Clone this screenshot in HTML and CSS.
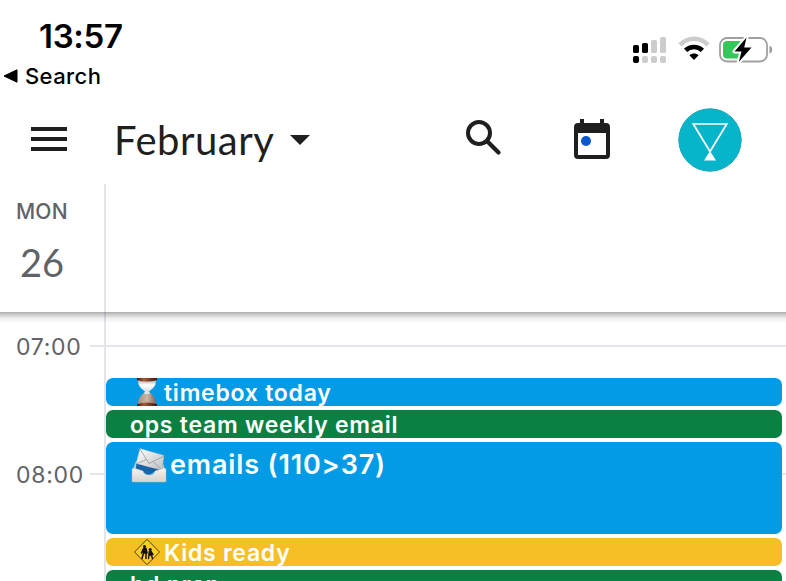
FILE: index.html
```html
<!DOCTYPE html>
<html lang="en">
<head>
    <meta charset="UTF-8">
    <meta name="viewport" content="width=device-width, initial-scale=1.0">
    <title>Calendar - February</title>
    <link rel="stylesheet" href="styles.css">
</head>
<body>
    <div class="status-bar">
        <div class="status-left">
            <div class="clock">13:57</div>
            <div class="back-link">
                <svg width="15" height="14" viewBox="0 0 15 14"><path d="M1 7L14 .8V13.2Z" stroke="#000" stroke-linejoin="round"/></svg>
                <span>Search</span>
            </div>
        </div>
        <div class="status-icons">
            <svg class="signal" width="34" height="27" viewBox="0 0 34 27">
                <g fill="#000">
                    <rect x="0" y="8" width="6" height="8" rx="1.6"/>
                    <rect x="9" y="6" width="6" height="10" rx="1.6"/>
                    <rect x="0" y="19" width="6" height="7" rx="2"/>
                </g>
                <g fill="#ccc">
                    <rect x="18" y="3" width="6" height="13" rx="1.6"/>
                    <rect x="27" y="0" width="6" height="16" rx="1.6"/>
                    <rect x="9" y="19" width="6" height="7" rx="2"/>
                    <rect x="18" y="19" width="6" height="7" rx="2"/>
                    <rect x="27" y="19" width="6" height="7" rx="2"/>
                </g>
            </svg>
            <svg class="wifi" width="32" height="25" viewBox="0 0 32 25" fill="none">
                <path d="M2 8.8C10 .8 22 .8 30 8.8" stroke="#ccc" stroke-width="4.6"/>
                <path d="M7.6 14.4C12.2 9.8 19.8 9.8 24.4 14.4" stroke="#000" stroke-width="4.6"/>
                <path d="M11.4 19.2C14 16.9 18 16.9 20.6 19.2L16 24Z" fill="#000"/>
            </svg>
            <svg class="battery" width="54" height="28" viewBox="0 0 54 28">
                <rect x="1" y="2" width="47" height="23.5" rx="7" fill="#fff" stroke="#a0a0a0" stroke-width="1.8"/>
                <path d="M8 5H23V22.5H8Q4 22.5 4 18.5V9Q4 5 8 5Z" fill="#35c759"/>
                <path d="M50.5 9.5Q53.3 11 53.3 13.7Q53.3 16.5 50.5 18Z" fill="#999"/>
                <path d="M27.5 1.5L15.5 15.4H22.5L19.8 26L32.5 11.4H25.2Z" fill="#000" stroke="#fff" stroke-width="4" stroke-linejoin="round" paint-order="stroke"/>
            </svg>
        </div>
    </div>

    <div class="toolbar">
        <svg class="menu" width="36" height="24" viewBox="0 0 36 24" fill="#1f1f1f"><path d="M0 0H36V4H0ZM0 10H36V14H0ZM0 20H36V24H0Z"/></svg>
        <div class="month">February</div>
        <svg class="arrow" width="20" height="10" viewBox="0 0 20 10"><path d="M0 0H20L10 10Z" fill="#1f1f1f"/></svg>
        <svg class="search" width="36" height="36" viewBox="0 0 36 36" fill="none" stroke="#1f1f1f" stroke-width="4">
            <circle cx="13" cy="13" r="11"/>
            <path d="M21 21L32.5 32.5" stroke-width="4.2" stroke-linecap="round"/>
        </svg>
        <svg class="today" width="36" height="40" viewBox="0 0 36 40">
            <path fill="#1f1f1f" fill-rule="evenodd" d="M6 0H10V4H26V0H30V4H32Q36 4 36 8V36Q36 40 32 40H4Q0 40 0 36V8Q0 4 4 4H6ZM4 14V36H32V14Z"/>
            <circle cx="12" cy="22" r="5" fill="#0b57d0"/>
        </svg>
        <svg class="avatar" width="64" height="64" viewBox="0 0 64 64">
            <circle cx="32" cy="32" r="31.2" fill="#06b5c9" stroke="#16a5b5"/>
            <path d="M15.3 16H48.7L32 43.5Z" fill="none" stroke="#fff" stroke-width="1.7"/>
            <path d="M32 43L38 52.5H26Z" fill="#fff"/>
        </svg>
    </div>

    <div class="day-header">
        <div class="day">
            <div class="day-name">MON</div>
            <div class="day-number">26</div>
        </div>
    </div>

    <div class="schedule">
        <div class="hours">
            <div class="hour"><span>07:00</span></div>
            <div class="hour"><span>08:00</span></div>
        </div>
        <div class="events">
            <div class="event blue">
                <svg class="hourglass" width="22" height="28" viewBox="0 0 22 28">
                    <defs>
                        <linearGradient id="wood"><stop offset="0" stop-color="#3a1a10"/><stop offset=".35" stop-color="#a85a36"/><stop offset="1" stop-color="#32150e"/></linearGradient>
                        <linearGradient id="glass" x2="0" y2="1"><stop offset="0" stop-color="#aaa5a2"/><stop offset=".4" stop-color="#fff"/><stop offset="1" stop-color="#d5dde2"/></linearGradient>
                        <linearGradient id="sand"><stop offset="0" stop-color="#a58b7b"/><stop offset=".5" stop-color="#cdb8a6"/><stop offset="1" stop-color="#80675a"/></linearGradient>
                    </defs>
                    <path d="M2 2H20C20 9 16 11 12.3 14H9.7C6 11 2 9 2 2Z" fill="url(#glass)"/>
                    <path d="M9.7 13H12.3C16 17 20 19 20 26H2C2 19 6 17 9.7 13Z" fill="url(#sand)"/>
                    <path d="M9.8 12H12.2L14 16H8Z" fill="#dce6ea"/>
                    <path d="M1 0H21V2Q11 5 1 2ZM1 26Q11 23 21 26V28H1Z" fill="url(#wood)"/>
                </svg>
                <span>timebox today</span>
            </div>
            <div class="event green"><span>ops team weekly email</span></div>
            <div class="event blue large">
                <svg class="mail" width="36" height="36" viewBox="0 0 36 36">
                    <defs>
                        <linearGradient id="tray" x2="0" y2="1"><stop offset="0" stop-color="#f4f3ef"/><stop offset="1" stop-color="#d5d4cf"/></linearGradient>
                        <linearGradient id="paper" x2="1" y2="1"><stop offset="0" stop-color="#fff"/><stop offset="1" stop-color="#bdbfc1"/></linearGradient>
                    </defs>
                    <path d="M5 14H31L35 25H1Z" fill="#c8cbce"/>
                    <path d="M6 16H30L32 25H4Z" fill="#125d9e"/>
                    <path d="M9 1.5L33 8.5L31 23L5 17Z" fill="url(#paper)" stroke="#b0b3b5" stroke-width=".5"/>
                    <path d="M9 2L18 16.5L33 9M5 17L15.5 12.5M22 14.5L31 23" fill="none" stroke="#96999c" stroke-width=".8"/>
                    <path d="M5 17Q14 18 23 24L18 28L8 24Z" fill="#1764a6"/>
                    <path d="M1 22L3 21L12 24Q13 28 18 28T24 24L33 21L35 22V34Q35 35 34 35H2Q1 35 1 34Z" fill="url(#tray)" stroke="#bbb" stroke-width=".5"/>
                </svg>
                <span>emails (110&gt;37)</span>
            </div>
            <div class="event yellow">
                <svg class="crossing" width="28" height="28" viewBox="0 0 28 28">
                    <path d="M14 1.3L26.5 14L14 26.7L1.5 14Z" fill="#f9ce27" stroke="#4b420f" stroke-width="1" stroke-linejoin="round"/>
                    <g fill="#111" stroke="#111" stroke-linecap="round" stroke-linejoin="round">
                        <circle cx="11.5" cy="8.4" r="1.5" stroke="none"/>
                        <path d="M10.5 10.5H13L14 15H10.5ZM10.5 15L9 20.5M13 15V20.5M10 11.5L8.5 15" stroke-width="1.5"/>
                        <circle cx="17.2" cy="11.5" r="1.5" stroke="none"/>
                        <path d="M16.3 13.5H18.2L19 17H15.8ZM16 17L15.5 20.5M18.4 17L19.5 20.5M18.5 14L20 16.5" stroke-width="1.4"/>
                    </g>
                </svg>
                <span>Kids ready</span>
            </div>
            <div class="event green"><span>bd prep</span></div>
        </div>
    </div>
</body>
</html>
```
FILE: styles.css
```css
body {
    margin: 0;
    height: 581px;
    display: flex;
    flex-direction: column;
    overflow: hidden;
    background-color: #fff;
    color: #1f1f1f;
    font-family: Inter, sans-serif;
}

svg {
    display: block;
    flex-shrink: 0;
}

.status-bar {
    height: 96px;
    flex-shrink: 0;
    display: flex;
    justify-content: space-between;
    color: #000;
}

.clock {
    padding: 16px 0 0 39px;
    font-size: 33px;
    line-height: 40px;
    font-weight: 600;
    letter-spacing: -0.3px;
}

.back-link {
    display: flex;
    align-items: center;
    gap: 7px;
    padding: 6px 0 0 3px;
    font-size: 22px;
    line-height: 28px;
    font-weight: 450;
    letter-spacing: 0.4px;
}

.status-icons {
    display: flex;
    padding: 36px 13px 0 0;
}

.signal {
    margin-top: 1px;
}

.wifi {
    margin-left: 11px;
}

.battery {
    margin-left: 9px;
}

.toolbar {
    height: 88px;
    flex-shrink: 0;
    display: flex;
    align-items: center;
    padding: 0 44px 0 31px;
}

.menu {
    margin-bottom: 2px;
}

.month {
    width: 176px;
    margin-left: 47px;
    font-family: Lato, sans-serif;
    font-size: 40px;
    line-height: 48px;
    letter-spacing: 0.5px;
    box-sizing: border-box;
}

.search {
    margin-left: 156px;
    margin-bottom: 4px;
}

.today {
    margin-left: 72px;
    margin-bottom: 2px;
}

.avatar {
    margin-left: 68px;
}

.day-header {
    position: relative;
    z-index: 2;
    height: 128px;
    flex-shrink: 0;
    background-color: #fff;
}

/* shadow over the scrolling part */
.day-header::after {
    content: "";
    position: absolute;
    top: 100%;
    left: 0;
    right: 0;
    height: 11px;
    background: linear-gradient(rgba(0, 0, 0, 0.32), rgba(0, 0, 0, 0.2) 25%, rgba(0, 0, 0, 0.06) 60%, transparent);
}

.day {
    width: 104px;
    height: 100%;
    border-right: 2px solid #e4e5ea;
    color: #5f6368;
    font-family: Lato, sans-serif;
}

.day-name {
    padding: 14px 0 0 16px;
    font-family: Inter, sans-serif;
    font-size: 21px;
    line-height: 28px;
    font-weight: 500;
    letter-spacing: 0.2px;
}

.day-number {
    padding: 12px 0 0 20px;
    font-size: 38px;
    line-height: 48px;
}

.schedule {
    display: grid;
    flex-grow: 1;
    min-height: 0;
    overflow: hidden;
    background: linear-gradient(#e4e5ea, #e4e5ea) 104px 0 / 2px 100% no-repeat;
}

.hours, .events {
    grid-area: 1 / 1;
}

.hours {
    padding-top: 19px;
    color: #5f6368;
    font-size: 23px;
}

.hour {
    height: 128px;
    display: flex;
    align-items: flex-start;
}

.hour span {
    width: 74px;
    padding-left: 16px;
    line-height: 32px;
    letter-spacing: 0.7px;
}

.hour::after {
    content: "";
    height: 2px;
    flex-grow: 1;
    margin-top: 14px;
    background-color: #e4e5ea;
}

.events {
    z-index: 1;
    display: flex;
    flex-direction: column;
    gap: 4px;
    padding: 66px 4px 0 106px;
}

.event {
    height: 28px;
    flex-shrink: 0;
    display: flex;
    padding-left: 24px;
    overflow: hidden;
    border-radius: 7px;
    color: #fff;
    font-size: 23px;
    line-height: 30px;
    font-weight: 570;
    letter-spacing: 0.75px;
    white-space: nowrap;
    box-sizing: border-box;
}

.large {
    height: 92px;
    font-size: 27px;
    line-height: 46px;
    letter-spacing: 0.85px;
}

.blue {
    background-color: #039be5;
}

.green {
    background-color: #0b8043;
}

.yellow {
    background-color: #f6bf26;
}

.hourglass {
    margin: 0 6px 0 6px;
}

.mail {
    margin: 5px 3px 0 1px;
}

.crossing {
    margin: 0 3px;
}
```
